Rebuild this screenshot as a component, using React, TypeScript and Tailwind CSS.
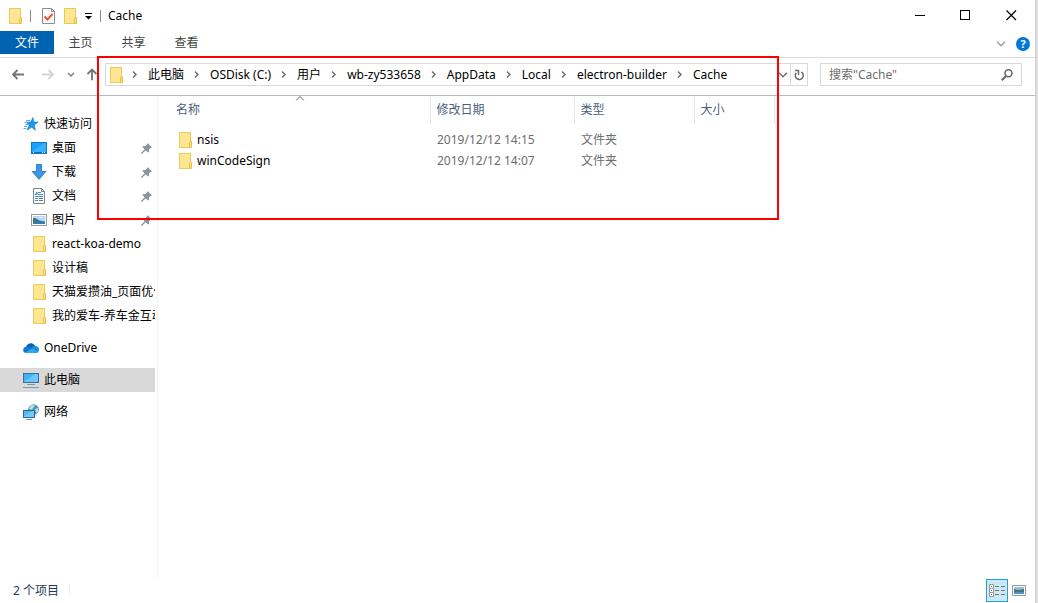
import type { ReactNode } from 'react';

interface SidebarItem {
  name: string;
  icon: ReactNode;
  pinned?: boolean;
}

function FolderIcon() {
  return (
    <svg width="13" height="16" viewBox="0 0 13 16" className="shrink-0">
      <rect x="0.5" y="0.5" width="11" height="15" fill="#ffe48f" stroke="#edc95a" />
      <path d="M1 1h10v14H1z" fill="#ffe693" />
      <path d="M10.5 15.5v-5l.8-1h1.2v6z" fill="#ffe082" stroke="#e8bf45" />
    </svg>
  );
}

function DocCheckIcon() {
  return (
    <svg width="13" height="16" viewBox="0 0 13 16">
      <path d="M.5.5h9l3 3v12H.5z" fill="#fafafa" stroke="#8c8c8c" />
      <path d="M9.5.5v3h3" fill="none" stroke="#8c8c8c" />
      <path d="M2.5 8.5l3 3L10.5 6" fill="none" stroke="#e8582a" strokeWidth="2" />
    </svg>
  );
}

function StarIcon() {
  return (
    <svg width="16" height="16" viewBox="0 0 16 16">
      <path d="M10 1.5l.8 4.400 4.400.2-3.800 2.900 1 5.200-3.700-3-4.500 2.900 1.900-4.800L3.200 6.200l4.300-.1z" fill="#2398e6" stroke="#1579c4" strokeWidth=".6" />
      <path d="M3 4.500h4M1.500 6.500h3M2.500 8.500h3M1 10.500h3M.5 12.500h3" stroke="#4fb0ee" />
    </svg>
  );
}

function DesktopIcon() {
  return (
    <svg width="16" height="16" viewBox="0 0 16 16">
      <rect x=".5" y="2.5" width="15" height="11" fill="#18a0fb" stroke="#0e78c8" />
      <path d="M1 11L13 3h2v9H1z" fill="#38b0ff" />
      <path d="M1 12.5h14" stroke="#0b6fbd" />
      <path d="M2 12.5h1M11 12.5h1M13 12.5h1" stroke="#fff" />
    </svg>
  );
}

function DownloadIcon() {
  return (
    <svg width="16" height="16" viewBox="0 0 16 16">
      <path d="M5.5.5h5v7h4.3L8 15.3 1.2 7.5h4.3z" fill="#3c96e4" stroke="#2b7fcb" />
    </svg>
  );
}

function DocumentIcon() {
  return (
    <svg width="16" height="16" viewBox="0 0 16 16">
      <path d="M2.5.5h8l3 3v12h-11z" fill="#fff" stroke="#858585" />
      <path d="M10.5.5v3h3" fill="none" stroke="#858585" />
      <path d="M7 4.5h3M4 6.5h2M7 6.5h5M4 8.5h8M4 10.5h3M4 12.5h3" stroke="#3b8fcc" />
      <path d="M8 10.5h4M8 12.5h4" stroke="#707070" />
      <path d="M4 7l2-3v3" fill="none" stroke="#3b8fcc" />
    </svg>
  );
}

function PictureIcon() {
  return (
    <svg width="16" height="12" viewBox="0 0 16 12">
      <rect x=".5" y=".5" width="15" height="11" fill="#fff" stroke="#999" />
      <path d="M2 2h12v8H2z" fill="#b4d8f7" />
      <path d="M2 4c2 0 4 .5 5 2l7 2v2H2z" fill="#3c7564" />
      <path d="M2 8c4-1 8 0 12-.5V10H2z" fill="#3979b8" />
      <path d="M8 3h4v1H8z" fill="#e8f5ff" />
    </svg>
  );
}

function OneDriveIcon() {
  return (
    <svg width="16" height="12" viewBox="0 0 16 12">
      <path d="M3 5.2C4 1.6 8.600-.2 11.500 3L13 5l-4 4-7-2z" fill="#0a62b9" />
      <path d="M10 4.500c3-1.500 5.800.2 6 3 .1 2-1.300 3.500-3 3.500L7 7z" fill="#1490df" />
      <path d="M3.500 4.600C6 4.500 8 6 10 7l-5 4H3.500C-.8 11-1 5 3.500 4.600z" fill="#1278d2" />
      <path d="M2 10.700L9 6.600l6 3.300c-.6.700-1.300 1.100-2.400 1.100H3.500z" fill="#2ea8ee" />
    </svg>
  );
}

function ComputerIcon() {
  return (
    <svg width="16" height="16" viewBox="0 0 16 16">
      <rect x=".5" y="1.500" width="15" height="9" fill="#40b2fa" stroke="#3a6f8f" />
      <path d="M1 10L12 2h3v8z" fill="#6bc6ff" />
      <path d="M4 12.500h8" stroke="#7895a8" />
      <path d="M0 15.500h16" stroke="#7a9ab5" />
    </svg>
  );
}

function NetworkIcon() {
  return (
    <svg width="16" height="16" viewBox="0 0 16 16">
      <circle cx="10.500" cy="5.500" r="5.300" fill="#4c94b8" />
      <path d="M7 2c2-2 4-1 5 0l-2 2-1 2-3-1zM12 5l3-1v4l-2 1z" fill="#b5dcd9" />
      <rect x=".5" y="6.500" width="11" height="7" fill="#4db7fb" stroke="#246b96" />
      <path d="M1 12l8-5h2v6H1z" fill="#74c9ff" />
      <path d="M3 15.500h6" stroke="#7594a8" />
    </svg>
  );
}

function PinIcon() {
  return (
    <svg width="11" height="11" viewBox="0 0 11 11" className="shrink-0">
      <path d="M6.500 0L11 4.500 9.500 5 8 6.500v2.300l-1 .7-2.300-2.300L1 10.800H0V10l3.700-3.800L1.500 4l.8-1h2.200L6 1.500z" fill="#89949d" />
    </svg>
  );
}

function Chevron({ className }: { className?: string }) {
  return (
    <svg width="10" height="6" viewBox="0 0 10 6" className={className}>
      <path d="M1 .7l4 4 4-4" fill="none" stroke="currentColor" strokeWidth="1.500" />
    </svg>
  );
}

function Arrow({ className }: { className?: string }) {
  return (
    <svg width="12" height="11" viewBox="0 0 12 11" className={className}>
      <path d="M12 5.500H1.500M5.500 1L1 5.500 5.500 10" fill="none" stroke="currentColor" strokeWidth="1.800" />
    </svg>
  );
}

const tabs = ['主页', '共享', '查看'];

const path = ['此电脑', 'OSDisk (C:)', '用户', 'wb-zy533658', 'AppData', 'Local', 'electron-builder', 'Cache'];

const quickAccess: SidebarItem[] = [
  { name: '桌面', icon: <DesktopIcon />, pinned: true },
  { name: '下载', icon: <DownloadIcon />, pinned: true },
  { name: '文档', icon: <DocumentIcon />, pinned: true },
  { name: '图片', icon: <PictureIcon />, pinned: true },
  { name: 'react-koa-demo', icon: <FolderIcon /> },
  { name: '设计稿', icon: <FolderIcon /> },
  { name: '天猫爱攒油_页面优化', icon: <FolderIcon /> },
  { name: '我的爱车-养车金互动', icon: <FolderIcon /> },
];

const files = [
  { name: 'nsis', date: '2019/12/12 14:15', type: '文件夹' },
  { name: 'winCodeSign', date: '2019/12/12 14:07', type: '文件夹' },
];

function TitleBar() {
  return (
    <header className="flex h-[31px] items-center pl-[9px]">
      <FolderIcon />
      <div className="ml-2 h-3 w-px bg-[#8a8a8a]" />
      <button aria-label="属性" className="ml-[11px]"><DocCheckIcon /></button>
      <button aria-label="新建文件夹" className="ml-[9px]"><FolderIcon /></button>
      <button aria-label="自定义快速访问工具栏" className="ml-2">
        <svg width="8" height="8" viewBox="0 0 8 8">
          <path d="M0 1.500h7" stroke="#000" />
          <path d="M0 4h7L3.500 7.500z" />
        </svg>
      </button>
      <div className="ml-[7px] h-3 w-px bg-[#8a8a8a]" />
      <h1 className="ml-[7px]">Cache</h1>
      <div className="ml-auto flex h-full pr-px">
        <button aria-label="最小化" className="flex w-[46px] items-center justify-center">
          <svg width="11" height="11"><path d="M1 5.500h10" stroke="#000" /></svg>
        </button>
        <button aria-label="最大化" className="flex w-[46px] items-center justify-center">
          <svg width="11" height="11"><rect x=".5" y=".5" width="9" height="9" fill="none" stroke="#000" /></svg>
        </button>
        <button aria-label="关闭" className="flex w-[46px] items-center justify-center">
          <svg width="11" height="11"><path d="M.5.5l9.500 9.500M10 .5L.5 10" stroke="#000" strokeWidth="1.200" /></svg>
        </button>
      </div>
    </header>
  );
}

function RibbonTabs() {
  return (
    <nav className="flex h-[27px] items-start border-b border-[#dadbdc] pr-[5px]">
      <button className="h-[23px] w-[54px] bg-[#0063b1] text-white">文件</button>
      {tabs.map(tab => (
        <button key={tab} className="h-6 w-[53px] text-[#444]">{tab}</button>
      ))}
      <div className="ml-auto flex h-[26px] items-center gap-[10px]">
        <button aria-label="展开功能区"><Chevron className="text-[#a0a0a0]" /></button>
        <button aria-label="帮助" className="flex size-[14px] items-center justify-center rounded-full bg-[#0078d7] text-[11px] font-bold text-white">?</button>
      </div>
    </nav>
  );
}

function AddressRow() {
  return (
    <div className="flex h-[38px] items-center border-b border-[#b9b9b9] pr-[13px] pb-1 pl-3">
      <button aria-label="后退" className="text-[#737373]"><Arrow /></button>
      <button aria-label="前进" className="ml-[18px] text-[#d5d5d5]"><Arrow className="rotate-180" /></button>
      <button aria-label="最近浏览的位置" className="ml-[13px] text-[#808080]">
        <svg width="8" height="6" viewBox="0 0 8 6"><path d="M1 1l3 3 3-3" fill="none" stroke="currentColor" strokeWidth="1.500" /></svg>
      </button>
      <button aria-label="上移" className="ml-[11px] text-[#737373]"><Arrow className="rotate-90" /></button>

      <div className="ml-[7px] flex h-[23px] min-w-0 flex-1 items-center border border-[#d9d9d9]">
        <div className="ml-1 w-3"><FolderIcon /></div>
        <ol className="flex min-w-0 flex-1 overflow-hidden">
          {path.map(part => (
            <li key={part} className="flex items-center whitespace-nowrap">
              <svg width="26" height="9" viewBox="0 0 26 9" className="shrink-0">
                <path d="M11 1.500l3 3-3 3" fill="none" stroke="#707070" strokeWidth="1.500" />
              </svg>
              <button>{part}</button>
            </li>
          ))}
        </ol>
        <button aria-label="以前的位置" className="mr-[2px] text-[#707070]"><Chevron /></button>
        <button aria-label="刷新" className="flex h-full w-[17px] items-center justify-center border-l border-[#d9d9d9]">
          <svg width="11" height="12" viewBox="0 0 11 12">
            <path d="M7.200 3A4 4 0 1 1 2.300 3.800M1 1.500h3.500V6" fill="none" stroke="#6b6b6b" strokeWidth="1.500" />
          </svg>
        </button>
      </div>

      <div className="ml-3 flex h-[23px] w-[202px] items-center border border-[#d9d9d9] pr-2 pl-2">
        <input aria-label="搜索" placeholder={'搜索"Cache"'} className="min-w-0 flex-1 outline-none placeholder:text-[#6d6d6d]" />
        <button aria-label="开始搜索">
          <svg width="12" height="12" viewBox="0 0 12 12">
            <circle cx="7.500" cy="4.300" r="3.500" fill="none" stroke="#666" strokeWidth="1.500" />
            <path d="M5 7L.8 11.200" stroke="#666" strokeWidth="2" />
          </svg>
        </button>
      </div>
    </div>
  );
}

function TopLevelItem({ name, icon, active }: { name: string; icon: ReactNode; active?: boolean }) {
  return (
    <a href="#" className={`flex h-6 items-center gap-[5px] pl-[23px] ${active ? 'bg-[#d9d9d9]' : ''}`}>
      <span className="flex w-4 justify-center">{icon}</span>
      {name}
    </a>
  );
}

function Sidebar() {
  return (
    <aside className="flex w-[158px] shrink-0 flex-col gap-2 border-r border-[#f3f3f3] pt-4 pr-[2px]">
      <div>
        <TopLevelItem name="快速访问" icon={<StarIcon />} />
        {quickAccess.map(item => (
          <a key={item.name} href="#" className="flex h-6 items-center gap-[5px] overflow-hidden pl-[31px] whitespace-nowrap">
            <span className="flex w-4 shrink-0 justify-center">{item.icon}</span>
            <span className="min-w-0 flex-1 overflow-hidden">{item.name}</span>
            {item.pinned && <span className="pr-[3px]"><PinIcon /></span>}
          </a>
        ))}
      </div>
      <TopLevelItem name="OneDrive" icon={<OneDriveIcon />} />
      <TopLevelItem name="此电脑" icon={<ComputerIcon />} active />
      <TopLevelItem name="网络" icon={<NetworkIcon />} />
    </aside>
  );
}

function FileTable() {
  return (
    <table className="w-[616px] table-fixed self-start text-left text-[#6d6d6d]">
      <colgroup>
        <col className="w-[272px]" />
        <col className="w-36" />
        <col className="w-[120px]" />
        <col className="w-20" />
      </colgroup>
      <thead className="text-[#4c607a]">
        <tr className="h-7">
          <th className="border-r border-[#e5e5e5] p-0 pl-3 font-normal">
            <button className="relative h-7 w-full pl-[6px] text-left">
              名称
              <svg width="9" height="5" viewBox="0 0 9 5" className="absolute top-0 left-1/2 -translate-x-1/2">
                <path d="M.5 4.500l4-4 4 4" fill="none" stroke="#606060" />
              </svg>
            </button>
          </th>
          {['修改日期', '类型', '大小'].map(label => (
            <th key={label} className="border-r border-[#e5e5e5] p-0 font-normal">
              <button className="h-7 w-full pl-[6px] text-left">{label}</button>
            </th>
          ))}
        </tr>
      </thead>
      <tbody className="before:block before:h-[5px]">
        {files.map(file => (
          <tr key={file.name} className="h-[21px]">
            <td className="p-0 pl-[21px] text-black">
              <div className="flex items-center gap-[5px]">
                <FolderIcon />
                {file.name}
              </div>
            </td>
            <td className="p-0 pl-[7px]">{file.date}</td>
            <td className="p-0 pl-[7px]">{file.type}</td>
            <td />
          </tr>
        ))}
      </tbody>
    </table>
  );
}

function StatusBar() {
  return (
    <footer className="flex h-[25px] items-center pr-[9px] pl-[13px] text-[#1e395b]">
      <span>2 个项目</span>
      <div className="ml-[10px] h-[11px] w-px bg-[#eee]" />
      <div className="ml-auto flex items-center gap-1">
        <button aria-label="详细信息" className="flex h-[23px] w-[22px] items-center justify-center border border-[#26a0da] bg-[#cbe8f6]">
          <svg width="17" height="13" viewBox="0 0 17 13">
            <path d="M.5.5h4v4h-4zM.5 4.500h4v4h-4zM.5 8.500h4v4h-4z" fill="#fff" stroke="#999" />
            <path d="M6 2.500h4M12 2.500h4M6 6.500h4M12 6.500h4M6 10.500h4M12 10.500h4" stroke="#777" />
            <path d="M2 2h1v1H2z" fill="#3b9c4b" />
            <path d="M2 6h1v1H2z" fill="#2878d8" />
            <path d="M2 10h1v1H2z" fill="#d22" />
          </svg>
        </button>
        <button aria-label="大缩略图">
          <svg width="14" height="11" viewBox="0 0 14 11">
            <path d="M.5.5h13v10H.5z" fill="#fff" stroke="#999" />
            <path d="M2 2h10v7H2z" fill="#8fc1ef" />
            <path d="M2 4l4 1 6-1v3H2z" fill="#44776e" />
            <path d="M2 7h10v2H2z" fill="#4f91c8" />
          </svg>
        </button>
      </div>
    </footer>
  );
}

export default function App() {
  return (
    <div className="relative flex min-h-screen bg-white font-['Noto_Sans','Noto_Sans_CJK_SC',sans-serif] text-[12px] leading-4 text-black">
      <div className="flex min-w-0 flex-1 flex-col">
        <TitleBar />
        <RibbonTabs />
        <AddressRow />
        <main className="flex flex-1">
          <Sidebar />
          <FileTable />
        </main>
        <StatusBar />
      </div>
      <div className="w-[3px] bg-linear-to-r from-[#cfcfcf] to-[#e6e6e6]" />

      {/* callout around the path and the file list */}
      <div className="pointer-events-none absolute top-14 left-[97px] h-[164px] w-[682px] border-2 border-[#ff0000]" />
    </div>
  );
}
